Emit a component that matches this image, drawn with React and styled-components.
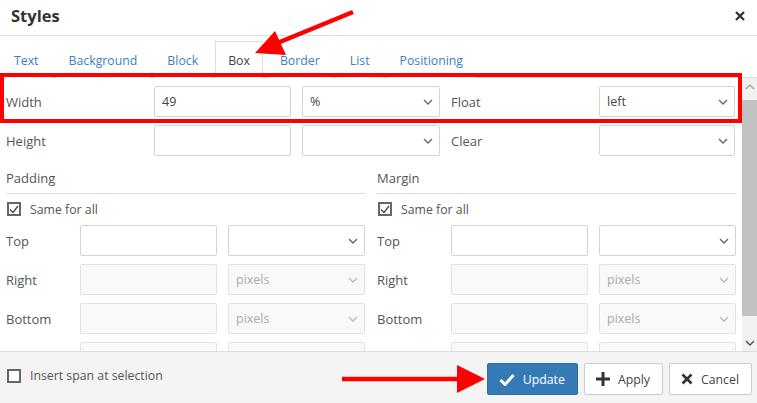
import React from 'react';
import styled, { createGlobalStyle } from 'styled-components';

const GlobalStyle = createGlobalStyle`
  html, body {
    margin: 0;
    padding: 0;
    background: #fff;
  }
  body {
    font-family: "Open Sans", "Liberation Sans", sans-serif;
    font-size: 13px;
    color: #444;
  }
  * {
    box-sizing: border-box;
  }
`;

const Dialog = styled.div`
  position: relative;
  width: 757px;
  height: 403px;
  display: flex;
  flex-direction: column;
  overflow: hidden;
  background: #fff;
`;

const Header = styled.div`
  height: 36px;
  flex-shrink: 0;
  display: flex;
  align-items: center;
  justify-content: space-between;
  padding: 0 11px 4px 11px;
  border-bottom: 1px solid #ddd;
`;

const Title = styled.h1`
  margin: 0;
  font-size: 16.5px;
  font-weight: 700;
  color: #333;
`;

const Close = styled.button`
  border: 0;
  background: none;
  padding: 0;
  width: 12px;
  height: 12px;
  display: flex;
  color: #333;
`;

const Tabs = styled.div`
  height: 42px;
  flex-shrink: 0;
  display: flex;
  align-items: flex-end;
  gap: 4px;
  padding-left: 1px;
  border-bottom: 1px solid #ddd;
`;

const Tab = styled.div`
  height: 37px;
  margin-bottom: -1px;
  padding: 1px 12px 0;
  display: flex;
  align-items: center;
  border: 1px solid ${(p) => (p.$active ? '#ddd' : 'transparent')};
  border-bottom-color: ${(p) => (p.$active ? '#fff' : 'transparent')};
  background: #fff;
  color: ${(p) => (p.$active ? '#444' : '#3d7fc1')};
  font-size: 12.3px;
`;

const BodyWrap = styled.div`
  flex: 1;
  min-height: 0;
  display: flex;
`;

const Body = styled.div`
  flex: 1;
  overflow: hidden;
  padding: 8px 0 0 6px;
`;

const Scrollbar = styled.div`
  width: 15px;
  flex-shrink: 0;
  background: #f1f1f1;
  display: flex;
  flex-direction: column;
`;

const ScrollButton = styled.div`
  height: 17px;
  display: flex;
  align-items: center;
  justify-content: center;
  color: ${(p) => (p.$dim ? '#a3a3a3' : '#505050')};
`;

const Thumb = styled.div`
  margin: 5px 0 0;
  height: 216px;
  background: #c1c1c1;
`;

const Spacer = styled.div`
  flex: 1;
`;

const Content = styled.div`
  width: 731px;
  display: flex;
  flex-direction: column;
  gap: 8px;
`;

const Row = styled.div`
  display: flex;
  align-items: center;
`;

const Label = styled.span`
  width: ${(p) => p.$w}px;
  margin-left: ${(p) => p.$ml || 0}px;
  flex-shrink: 0;
  color: #555;
  font-size: 13px;
`;

const Input = styled.div`
  width: ${(p) => p.$w || 137}px;
  margin-left: ${(p) => p.$ml || 0}px;
  flex-shrink: 0;
  height: 31px;
  border: 1px solid ${(p) => (p.$disabled ? '#e2e2e2' : '#d4d4d4')};
  border-radius: 2px;
  background: ${(p) => (p.$disabled ? '#f9f9f9' : '#fff')};
  padding: 0 7px;
  display: flex;
  align-items: center;
  color: #444;
  font-size: 12.5px;
`;

const SelectBox = styled(Input)`
  justify-content: space-between;
  padding-right: 6px;
  color: ${(p) => (p.$disabled ? '#aaa' : '#444')};
  svg {
    color: ${(p) => (p.$disabled ? '#bbb' : '#666')};
  }
`;

const Columns = styled.div`
  display: grid;
  grid-template-columns: 360px 360px;
  column-gap: 11px;
  margin-top: 4px;
`;

const Section = styled.div`
  display: flex;
  flex-direction: column;
  gap: 8px;
`;

const SectionTitle = styled.div`
  line-height: 20px;
  padding-bottom: 5px;
  border-bottom: 1px solid #ddd;
  color: #555;
  font-size: 13px;
  margin-bottom: -3px;
`;

const CheckRow = styled.label`
  display: flex;
  align-items: center;
  gap: 9px;
  height: 20px;
  color: #555;
  font-size: 12.3px;
  margin-left: 1px;
  margin-bottom: -2px;
`;

const Box = styled.span`
  width: 14px;
  height: 14px;
  border: 2px solid #666;
  display: flex;
  align-items: center;
  justify-content: center;
  background: #fff;
`;

const Footer = styled.div`
  height: 52px;
  flex-shrink: 0;
  background: #f4f4f4;
  border-top: 1px solid #ddd;
  display: flex;
  align-items: center;
  justify-content: space-between;
  padding: 0 5px 0 7px;
  & > label {
    margin: 0 0 4px;
  }
`;

const Buttons = styled.div`
  display: flex;
  gap: 6px;
  margin-top: 3px;
`;

const Button = styled.button`
  height: 32px;
  padding: 0 12px 0 11px;
  display: flex;
  align-items: center;
  gap: 8px;
  border-radius: 2px;
  font-family: inherit;
  font-size: 12.3px;
  border: 1px solid ${(p) => (p.$primary ? '#2e6da4' : '#ccc')};
  background: ${(p) => (p.$primary ? '#337ab7' : '#fff')};
  color: ${(p) => (p.$primary ? '#fff' : '#444')};
`;

const Overlay = styled.svg`
  position: absolute;
  left: 0;
  top: 0;
  pointer-events: none;
`;

const Highlight = styled.div`
  position: absolute;
  left: 0;
  top: 73px;
  width: 742px;
  height: 50px;
  border: 4px solid #f00;
  pointer-events: none;
`;

const Chevron = ({ up }) => (
  <svg width="10" height="6" viewBox="0 0 10 6">
    <path d={up ? 'M1 5l4-4 4 4' : 'M1 1l4 4 4-4'} fill="none" stroke="currentColor" strokeWidth="1.4" />
  </svg>
);

const Select = ({ value, disabled, w, ml }) => (
  <SelectBox $disabled={disabled} $w={w} $ml={ml}>
    <span>{value}</span>
    <Chevron />
  </SelectBox>
);

const Check = ({ checked }) => (
  <Box>
    {checked && (
      <svg width="10" height="9" viewBox="0 0 10 9">
        <path d="M1 4.5l3 3L9 1" fill="none" stroke="#444" strokeWidth="1.3" />
      </svg>
    )}
  </Box>
);

const sides = ['Top', 'Right', 'Bottom', 'Left'];

const SideGroup = ({ title }) => (
  <Section>
    <SectionTitle>{title}</SectionTitle>
    <CheckRow>
      <Check checked />
      Same for all
    </CheckRow>
    {sides.map((s, i) => (
      <Row key={s}>
        <Label $w={74}>{s}</Label>
        <Input $disabled={i > 0} />
        <Select value={i > 0 ? 'pixels' : ''} disabled={i > 0} w={137} ml={11} />
      </Row>
    ))}
  </Section>
);

const tabs = ['Text', 'Background', 'Block', 'Box', 'Border', 'List', 'Positioning'];

export default function App() {
  return (
    <>
      <GlobalStyle />
      <Dialog>
        <Header>
          <Title>Styles</Title>
          <Close>
            <svg width="12" height="12" viewBox="0 0 12 12">
              <path d="M2 2l8 8M10 2l-8 8" stroke="currentColor" strokeWidth="2.4" />
            </svg>
          </Close>
        </Header>
        <Tabs>
          {tabs.map((t) => (
            <Tab key={t} $active={t === 'Box'}>
              {t}
            </Tab>
          ))}
        </Tabs>
        <BodyWrap>
          <Body>
            <Content>
              <Row>
                <Label $w={148}>Width</Label>
                <Input>49</Input>
                <Select value="%" w={138} ml={11} />
                <Label $w={148} $ml={11}>Float</Label>
                <Select value="left" w={136} />
              </Row>
              <Row>
                <Label $w={148}>Height</Label>
                <Input />
                <Select value="" w={138} ml={11} />
                <Label $w={148} $ml={11}>Clear</Label>
                <Select value="" w={136} />
              </Row>
              <Columns>
                <SideGroup title="Padding" />
                <SideGroup title="Margin" />
              </Columns>
            </Content>
          </Body>
          <Scrollbar>
            <ScrollButton $dim>
              <Chevron up />
            </ScrollButton>
            <Thumb />
            <Spacer />
            <ScrollButton>
              <Chevron />
            </ScrollButton>
          </Scrollbar>
        </BodyWrap>
        <Footer>
          <CheckRow>
            <Check />
            Insert span at selection
          </CheckRow>
          <Buttons>
            <Button $primary>
              <svg width="16" height="13" viewBox="0 0 16 13">
                <path d="M1.5 7l4.5 4.5L14.5 2" fill="none" stroke="#fff" strokeWidth="3" />
              </svg>
              Update
            </Button>
            <Button>
              <svg width="14" height="14" viewBox="0 0 14 14">
                <path d="M7 0v14M0 7h14" stroke="#333" strokeWidth="3" />
              </svg>
              Apply
            </Button>
            <Button>
              <svg width="12" height="12" viewBox="0 0 12 12">
                <path d="M1.5 1.5l9 9M10.5 1.5l-9 9" stroke="#333" strokeWidth="2.6" />
              </svg>
              Cancel
            </Button>
          </Buttons>
        </Footer>
        <Highlight />
        <Overlay width="757" height="403" viewBox="0 0 757 403">
          <line x1="353" y1="12" x2="275" y2="44" stroke="#f00" strokeWidth="4.5" />
          <polygon points="255,53 275,31 286,55" fill="#f00" />
          <line x1="342" y1="379" x2="460" y2="379" stroke="#f00" strokeWidth="4.5" />
          <polygon points="485,379 457,365 457,393" fill="#f00" />
        </Overlay>
      </Dialog>
    </>
  );
}
